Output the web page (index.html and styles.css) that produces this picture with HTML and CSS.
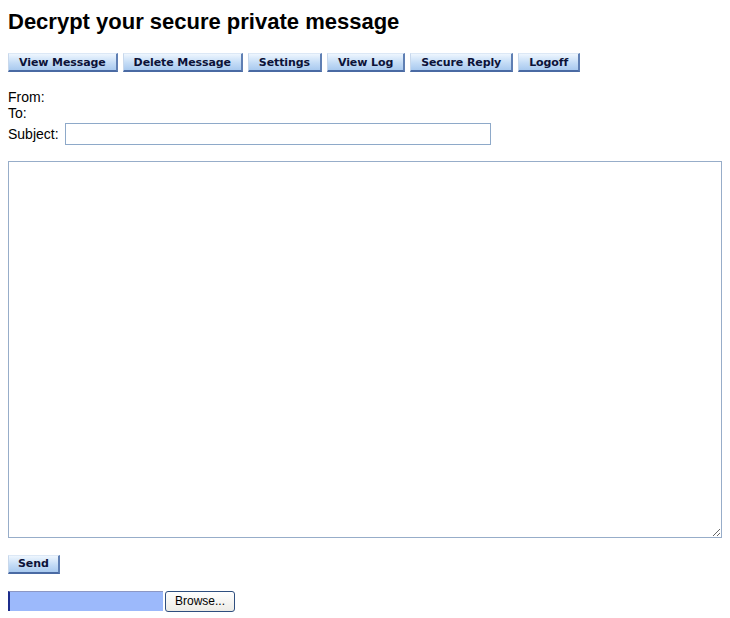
FILE: index.html
```html
<!DOCTYPE html>
<html>
<head>
<meta charset="utf-8">
<link rel="stylesheet" href="styles.css">
</head>
<body>
<h1 class="title">Decrypt your secure private message</h1>
<div class="toolbar">
  <button class="btn">View Message</button>
  <button class="btn">Delete Message</button>
  <button class="btn">Settings</button>
  <button class="btn">View Log</button>
  <button class="btn">Secure Reply</button>
  <button class="btn">Logoff</button>
</div>
<div class="meta">
  <div class="meta-line">From:</div>
  <div class="meta-line">To:</div>
  <div class="subject-row">
    <label class="subject-label">Subject:</label>
    <input class="subject-input" type="text">
  </div>
</div>
<textarea class="body-text"></textarea>
<div class="send-row">
  <button class="btn">Send</button>
</div>
<div class="file-row">
  <span class="file-field"></span>
  <button class="browse">Browse...</button>
</div>
</body>
</html>
```

FILE: styles.css
```css
html, body {
  margin: 0;
  padding: 0;
  background: #ffffff;
}
body {
  padding: 8px;
  font-family: "Liberation Sans", Arial, sans-serif;
  color: #000;
}
.title {
  margin: 1px 0 0 0;
  font-size: 22px;
  font-weight: bold;
  line-height: 25px;
}
.toolbar {
  display: flex;
  gap: 5px;
  margin-top: 19px;
}
.btn {
  height: 19px;
  padding: 0 10px;
  font-family: "DejaVu Sans", Verdana, sans-serif;
  font-size: 11px;
  font-weight: bold;
  letter-spacing: -0.1px;
  color: #0c1238;
  background: linear-gradient(#eef6fe, #c4dcf6 55%, #a9caef);
  border: 1px solid;
  border-color: #dce8f6 #5f7fb3 #4a6aa3 #c8d8ec;
  border-width: 1px 2px 2px 1px;
  cursor: pointer;
  line-height: 15px;
}
.meta {
  margin-top: 17px;
  font-size: 14px;
  line-height: 16px;
}
.subject-row {
  display: flex;
  align-items: center;
  gap: 6px;
  margin-top: 2px;
}
.subject-input {
  width: 420px;
  height: 18px;
  margin: 0;
  padding: 1px 2px;
  border: 1px solid #8ea9c9;
  font-size: 13px;
}
.body-text {
  display: block;
  box-sizing: border-box;
  width: 714px;
  height: 377px;
  margin: 16px 0 0 0;
  border: 1px solid #97adc9;
  resize: both;
}
.send-row {
  margin-top: 15px;
}
.send-row .btn {
  padding: 0 9px;
}
.file-row {
  display: flex;
  align-items: center;
  gap: 2px;
  margin-top: 17px;
}
.file-field {
  box-sizing: border-box;
  width: 155px;
  height: 20px;
  background: #9cb9fb;
  border-left: 2px solid #1c2c8c;
  border-top: 1px solid #8c97c4;
}
.browse {
  box-sizing: border-box;
  width: 70px;
  height: 21px;
  font-family: "Liberation Sans", Arial, sans-serif;
  font-size: 12px;
  color: #000;
  background: linear-gradient(#ffffff, #ecebe6);
  border: 1px solid #2f4f7f;
  border-radius: 3px;
  padding: 0;
}
```
